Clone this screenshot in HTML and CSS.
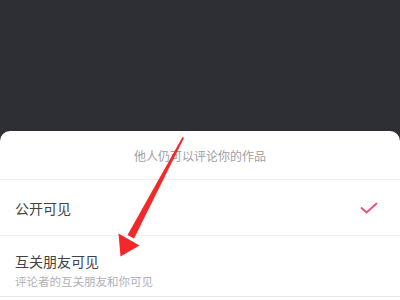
FILE: index.html
```html
<!DOCTYPE html>
<html lang="zh-CN">
<head>
    <meta charset="UTF-8">
    <meta name="viewport" content="width=device-width, initial-scale=1.0">
    <title>评论权限</title>
    <link rel="stylesheet" href="styles.css">
</head>
<body>
    <div class="screen">
        <div class="sheet">
            <div class="sheet-header">他人仍可以评论你的作品</div>

            <div class="option">
                <span class="option-title">公开可见</span>
                <svg class="check" width="18" height="12" viewBox="0 0 18 12">
                    <path d="M1.5 6 L6.5 10.5 L16.5 1.5" fill="none" stroke="#e9506f" stroke-width="1.8" stroke-linecap="round" stroke-linejoin="round"/>
                </svg>
            </div>

            <div class="option option-sub">
                <span class="option-title">互关朋友可见</span>
                <span class="option-desc">评论者的互关朋友和你可见</span>
            </div>
        </div>

        <!-- 标注箭头 -->
        <svg class="arrow" width="400" height="300" viewBox="0 0 400 300">
            <polygon points="182.5,137 184,138 134,238.5 127.5,235" fill="#f2282a"/>
            <polygon points="118.5,233.5 139.5,245.5 120.5,256.5" fill="#f2282a"/>
        </svg>
    </div>
</body>
</html>
```

FILE: styles.css
```css
body {
    margin: 0;
    background: #2e2f34;
    font-family: "Noto Sans CJK SC", "Noto Sans", sans-serif;
}

.screen {
    position: relative;
    width: 400px;
    height: 300px;
    overflow: hidden;
    display: flex;
    flex-direction: column;
}

.sheet {
    margin-top: 131px;
    flex: 1;
    background: #fff;
    border-radius: 10px 10px 0 0;
    display: flex;
    flex-direction: column;
}

.sheet-header {
    height: 48px;
    display: flex;
    align-items: center;
    justify-content: center;
    font-size: 12px;
    color: #a0a0a3;
    border-bottom: 1px solid #f0f0f0;
}

.option {
    height: 55px;
    padding: 0 22px 0 15px;
    display: flex;
    align-items: center;
    justify-content: space-between;
    border-bottom: 1px solid #f0f0f0;
}

.option-title {
    font-size: 14px;
    color: #424245;
}

.option-sub {
    height: 61px;
    flex-direction: column;
    align-items: flex-start;
    justify-content: flex-start;
    padding-top: 15px;
    box-sizing: border-box;
    border-bottom: 1px solid #e8e8ec;
}

.option-sub .option-title {
    line-height: 20px;
}

.option-desc {
    font-size: 11.5px;
    line-height: 16px;
    color: #b0b0b4;
    margin-top: 2px;
}

.arrow {
    position: absolute;
    left: 0;
    top: 0;
    pointer-events: none;
}
```
